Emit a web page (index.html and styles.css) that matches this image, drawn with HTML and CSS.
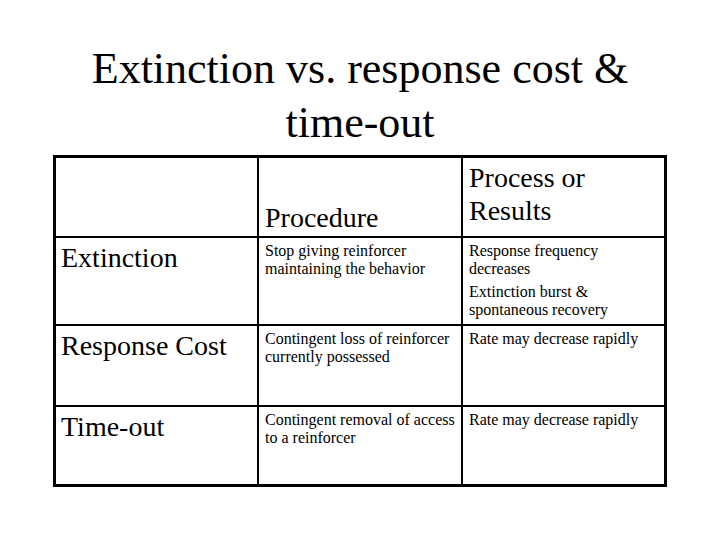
FILE: index.html
```html
<!DOCTYPE html>
<html lang="en">
<head>
<meta charset="utf-8">
<title>Extinction vs. response cost &amp; time-out</title>
<link rel="stylesheet" href="styles.css">
</head>
<body>
<div class="slide">
  <h1 class="title">Extinction vs. response cost &amp;<br>time-out</h1>
  <div class="grid">
    <div class="cell"></div>
    <div class="cell head head-bottom c2">Procedure</div>
    <div class="cell head c3">Process or Results</div>

    <div class="cell label">Extinction</div>
    <div class="cell small c2"><p>Stop giving reinforcer maintaining the behavior</p></div>
    <div class="cell small c3"><p>Response frequency decreases</p><p class="gap">Extinction burst &amp; spontaneous recovery</p></div>

    <div class="cell label">Response Cost</div>
    <div class="cell small c2"><p>Contingent loss of reinforcer currently possessed</p></div>
    <div class="cell small c3"><p>Rate may decrease rapidly</p></div>

    <div class="cell label">Time-out</div>
    <div class="cell small c2"><p>Contingent removal of access to a reinforcer</p></div>
    <div class="cell small c3"><p>Rate may decrease rapidly</p></div>
  </div>
</div>
</body>
</html>
```

FILE: styles.css
```css
html, body {
  margin: 0;
  padding: 0;
  background: #fff;
}

body {
  font-family: "Liberation Serif", "Times New Roman", serif;
  color: #000;
}

.slide {
  width: 720px;
  height: 540px;
  padding-top: 42px;
  box-sizing: border-box;
}

.title {
  margin: 0;
  font-weight: normal;
  font-size: 44px;
  line-height: 54px;
  text-align: center;
}

.grid {
  margin: 5px 0 0 53px;
  width: 614px;
  box-sizing: border-box;
  border: 3px solid #000;
  background: #000;
  display: grid;
  grid-template-columns: 201px 202px 201px;
  grid-template-rows: 78px 86px 79px 77px;
  gap: 2px;
}

.cell {
  background: #fff;
  box-sizing: border-box;
  padding: 4px 2px 0 5px;
}

.c2 {
  padding-left: 6px;
}

.c3 {
  padding-left: 6px;
  padding-right: 8px;
}

.head {
  font-size: 28px;
  line-height: 33px;
  padding-top: 3px;
}

.head-bottom {
  display: flex;
  align-items: flex-end;
  padding-top: 0;
  padding-bottom: 2px;
}

.label {
  font-size: 28px;
  line-height: 32px;
}

.small {
  font-size: 16px;
  line-height: 18px;
}

.small p {
  margin: 0;
}

.small p.gap {
  margin-top: 5px;
}
```
